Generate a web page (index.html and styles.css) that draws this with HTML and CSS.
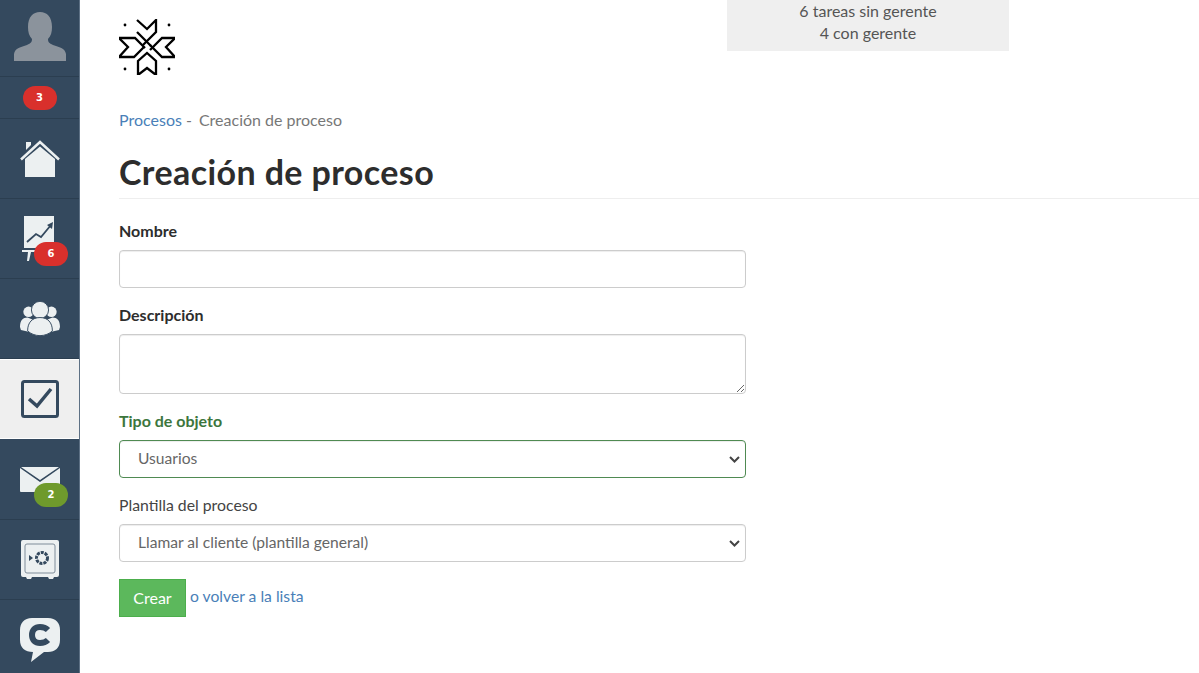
FILE: index.html
```html
<!DOCTYPE html>
<html lang="es">
<head>
  <meta charset="UTF-8">
  <title>Creación de proceso</title>
  <link rel="stylesheet" href="styles.css">
</head>
<body>
  <nav class="sidebar">
    <a class="side-item side-user">
      <svg class="avatar" width="52" height="52" viewBox="0 0 52 52"><path fill="#8b939c" d="M0 50v-7c1-6 7-7 13-9 4-2 5-3 5-6-3-3-4-7-4-12C14 6 19 1 26 1s12 5 12 15c0 5-1 9-4 12 0 3 1 4 5 6 6 2 12 3 13 9v7z"/></svg>
    </a>
    <div class="side-item side-count"><span class="badge badge-red">3</span></div>
    <a class="side-item">
      <svg width="40" height="38" viewBox="0 0 40 38"><path fill="#ecf0f1" d="M5 19 20 6.500 35 19v18H5z"/><path fill="none" stroke="#ecf0f1" stroke-width="2.500" d="M1 19.500 20 2l19 17.500"/><path fill="#ecf0f1" d="M6 2h5v3l-5 5z"/></svg>
    </a>
    <a class="side-item">
      <svg class="chart" width="32" height="46" viewBox="0 0 32 46"><path fill="#ecf0f1" d="M2 1h30v32H2z"/><path fill="none" stroke="#34495e" stroke-width="1.800" d="M5 27l9-8 5 3 10-12"/><path fill="#34495e" d="M31 7l-1 7-5-4z"/><path fill="#ecf0f1" d="M0 35h15v2H9l-2 9H5l1-9H0z"/></svg>
      <span class="badge badge-red badge-over">6</span>
    </a>
    <a class="side-item">
      <svg width="40" height="35" viewBox="0 0 42 36"><g fill="#ecf0f1"><circle cx="9" cy="11" r="5.500"/><circle cx="33" cy="11" r="5.500"/><path d="M0 27c0-7 3-10 8-10l5 2-4 13-8-2zM42 27c0-7-3-10-8-10l-5 2 4 13 8-2z"/></g><circle cx="21" cy="9" r="9" fill="#ecf0f1" stroke="#34495e"/><path fill="#ecf0f1" stroke="#34495e" d="M8 31c0-9 5-14 13-14s13 5 13 14c-3 3-8 5-13 5S11 34 8 31z"/></svg>
    </a>
    <a class="side-item side-active">
      <svg width="38" height="38" viewBox="0 0 38 38"><rect x="1.500" y="1.500" width="35" height="35" rx="2" fill="none" stroke="#34495e" stroke-width="3"/><path fill="none" stroke="#34495e" stroke-width="3.500" d="M8 19l8 7L30 9"/></svg>
    </a>
    <a class="side-item side-mail">
      <svg width="40" height="25" viewBox="0 0 40 25"><path fill="#ecf0f1" d="M1 0h38L20 13zM0 1l20 14L40 1v23a1 1 0 0 1-1 1H1a1 1 0 0 1-1-1z"/></svg>
      <span class="badge badge-green badge-over">2</span>
    </a>
    <a class="side-item">
      <svg width="38" height="39" viewBox="0 0 38 39"><path fill="#ecf0f1" fill-rule="evenodd" d="M2 0h34a2 2 0 0 1 2 2v33a2 2 0 0 1-2 2h-3l-1 2h-4l-1-2H11l-1 2H6l-1-2H2a2 2 0 0 1-2-2V2a2 2 0 0 1 2-2z"/><rect x="4" y="4" width="30" height="29" rx="2" fill="#ecf0f1" stroke="#7f8c99"/><path fill="#34495e" d="M8 15l4 3-4 3z"/><circle cx="21" cy="18" r="5.500" fill="none" stroke="#34495e" stroke-width="3" stroke-dasharray="3 1"/></svg>
    </a>
    <a class="side-item">
      <svg width="40" height="44" viewBox="0 0 40 44"><path fill="#ecf0f1" d="M12 0h16c8 0 12 5 12 12v10c0 8-5 12-12 12h-4l-13 10 2-10C5 34 0 30 0 22V12C0 5 4 0 12 0z"/><path fill="none" stroke="#34495e" stroke-width="6" d="M28 12c-2-2-5-3-8-3-5 0-8 3-8 8s3 8 8 8c3 0 6-1 8-3"/></svg>
    </a>
  </nav>

  <main class="content">
    <header class="topbar">
      <svg class="logo" width="56" height="56" viewBox="2 2 56 56"><g fill="none" stroke="#000" stroke-width="2.300"><path d="M20 3l10 9 9-9v12L26 28"/><path d="M20 15l14 14"/><path d="M21 58V44l9-8 9 8v14l-9-7z"/><path d="M2 21h16l10 10"/><path d="M2 21l9 9-9 10h15l10-10"/><path d="M58 21H45L33 33"/><path d="M58 21l-9 9 9 10H45L33 28"/></g><g fill="#000"><circle cx="8" cy="8" r="1.400"/><circle cx="52" cy="8" r="1.400"/><circle cx="8" cy="52" r="1.400"/><circle cx="52" cy="52" r="1.400"/></g></svg>
      <div class="summary">
        <div>6 tareas sin gerente</div>
        <div>4 con gerente</div>
      </div>
    </header>

    <div class="breadcrumb"><a href="#">Procesos</a> -<span class="crumb-current">Creación de proceso</span></div>

    <h1 class="page-title">Creación de proceso</h1>

    <form class="form">
      <div class="field">
        <label class="label-strong" for="nombre">Nombre</label>
        <input class="control" type="text" id="nombre">
      </div>
      <div class="field">
        <label class="label-strong" for="descripcion">Descripción</label>
        <textarea class="control control-area" id="descripcion"></textarea>
      </div>
      <div class="field field-ok">
        <label class="label-strong" for="tipo">Tipo de objeto</label>
        <select class="control control-select" id="tipo"><option>Usuarios</option></select>
      </div>
      <div class="field">
        <label class="label-plain" for="plantilla">Plantilla del proceso</label>
        <select class="control control-select" id="plantilla"><option>Llamar al cliente (plantilla general)</option></select>
      </div>
      <div class="actions">
        <button class="btn-create" type="button">Crear</button>
        <span class="back">o <a href="#">volver a la lista</a></span>
      </div>
    </form>
  </main>
</body>
</html>
```

FILE: styles.css
```css
* {
  box-sizing: border-box;
}

html, body {
  height: 100%;
}

body {
  margin: 0;
  display: flex;
  overflow: hidden;
  background-color: #fff;
  color: #333;
  font-family: Lato, "Open Sans", sans-serif;
  font-size: 16px;
}

a {
  color: #4a7fb8;
  text-decoration: none;
}

.sidebar {
  width: 80px;
  flex: none;
  height: 673px;
  overflow: hidden;
  background-color: #34495e;
  border-right: 1px solid #5d7084;
}

.side-item {
  position: relative;
  display: flex;
  align-items: center;
  justify-content: center;
  height: 80px;
  border-bottom: 1px solid #2b3e50;
}

.side-user {
  height: 77px;
  align-items: flex-end;
}

.avatar {
  margin-bottom: 13px;
}

.side-count {
  height: 42px;
}

.side-active {
  background-color: #efefef;
  border-top: 1px solid #fff;
  border-bottom: 1px solid #fff;
  margin-right: -1px;
}

.side-mail {
  height: 81px;
}

.chart {
  margin-right: 3px;
  margin-bottom: 2px;
}

.badge {
  display: block;
  width: 34px;
  height: 24px;
  border-radius: 12px;
  color: #fff;
  font-family: "DejaVu Sans", sans-serif;
  font-size: 10px;
  font-weight: 700;
  line-height: 24px;
  text-align: center;
}

.badge-red {
  background-color: #d9302c;
}

.badge-green {
  background-color: #6f9a2c;
}

.badge-over {
  position: absolute;
  left: 34px;
  top: 43px;
}

.side-mail .badge-over {
  top: 44px;
}

.content {
  flex: 1;
  min-width: 0;
}

.topbar {
  display: flex;
  align-items: flex-start;
  height: 100px;
  padding-left: 39px;
}

.logo {
  margin-top: 19px;
}

.summary {
  width: 282px;
  height: 51px;
  margin-left: 552px;
  background-color: #efefef;
  color: #555;
  line-height: 22px;
  text-align: center;
}

.breadcrumb {
  padding-left: 39px;
  height: 40px;
  line-height: 39px;
  color: #777;
}

.crumb-current {
  margin-left: 7px;
}

.page-title {
  margin: 0 0 0 39px;
  height: 59px;
  padding-top: 13px;
  border-bottom: 1px solid #eee;
  color: #2d2d2d;
  font-size: 34px;
  font-weight: 700;
  letter-spacing: 0.4px;
  line-height: 38px;
}

.form {
  width: 666px;
  padding: 22px 0 0 39px;
}

.field {
  margin-bottom: 17px;
}

.field label {
  display: block;
  height: 21px;
  margin-bottom: 8px;
  line-height: 20px;
}

.field .label-strong {
  font-weight: 700;
  color: #2d2d2d;
}

.field .label-plain {
  color: #444;
  font-size: 15.8px;
}

.control {
  display: block;
  width: 100%;
  height: 38px;
  padding: 6px 15px;
  border: 1px solid #ccc;
  border-radius: 4px;
  background-color: #fff;
  box-shadow: inset 0 1px 1px rgba(0, 0, 0, .075);
  color: #666;
  font-family: inherit;
  font-size: 15.6px;
}

.control-area {
  height: 60px;
}

.control-select {
  appearance: none;
  padding: 0 18px 2px;
  background-image: url("data:image/svg+xml,%3Csvg xmlns='http://www.w3.org/2000/svg' width='11' height='7'%3E%3Cpath d='M1 1l4.500 4.500L10 1' fill='none' stroke='%23444' stroke-width='2'/%3E%3C/svg%3E");
  background-repeat: no-repeat;
  background-position: right 5px center;
}

.field-ok .label-strong {
  color: #3c763d;
}

.field-ok .control {
  border-color: #4f8a52;
}

.actions {
  display: flex;
  align-items: flex-start;
  gap: 4px;
}

.btn-create {
  width: 67px;
  height: 38px;
  padding-bottom: 3px;
  border: 1px solid #4cae4c;
  background-color: #5cb85c;
  color: #fff;
  font-family: inherit;
  font-size: 16px;
}

.back {
  font-size: 15.7px;
  line-height: 35px;
  color: #4a7fb8;
}
```
